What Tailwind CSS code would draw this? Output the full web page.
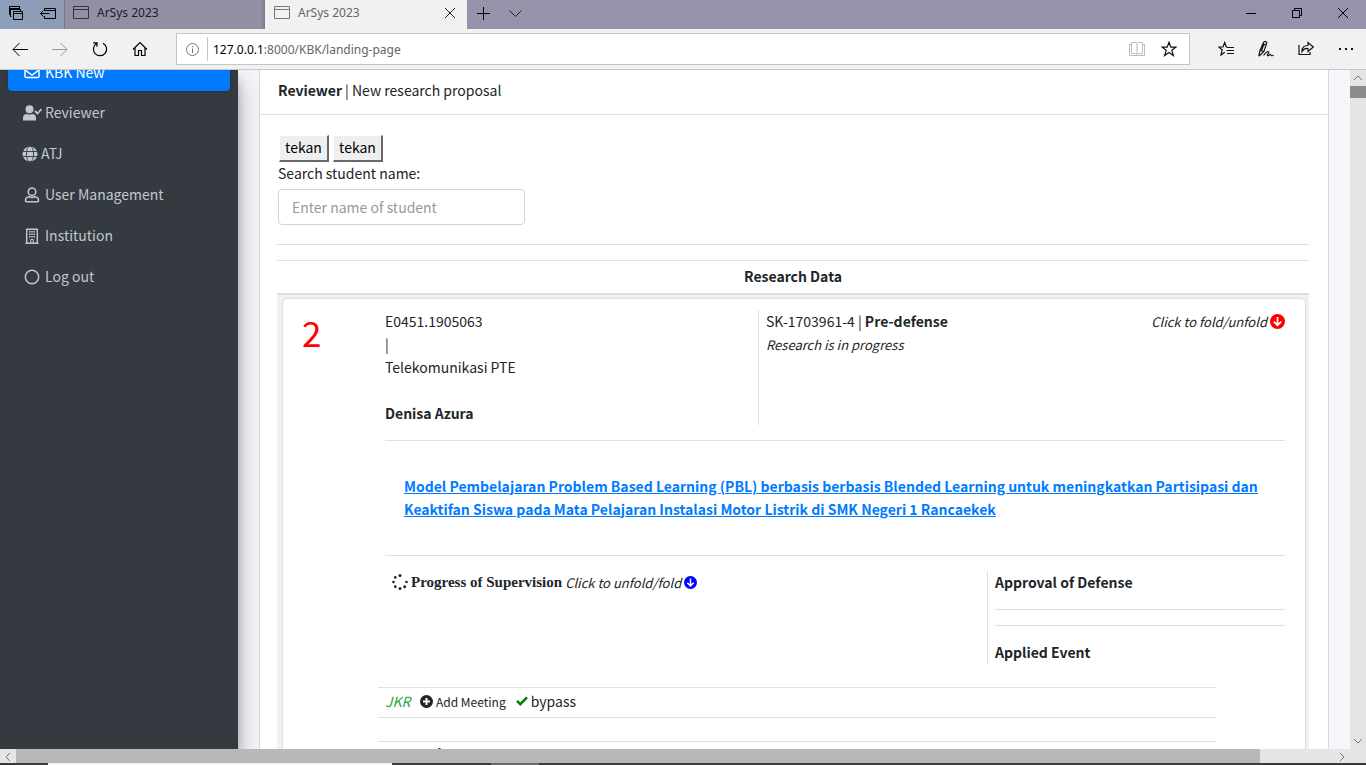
<!DOCTYPE html>
<html lang="en">
<head>
<meta charset="utf-8">
<title>ArSys 2023</title>
<script src="https://cdn.jsdelivr.net/npm/@tailwindcss/browser@4"></script>
</head>
<body class="h-screen overflow-hidden flex flex-col bg-[#f1f1f1] font-['Noto_Sans_CJK_SC',sans-serif] text-[14px] leading-[23px] text-[#212529]">

<!-- Tab strip -->
<header class="h-[29px] shrink-0 flex items-stretch bg-linear-to-r from-[#8ba0bd] via-[#9694aa] via-10% to-[#9493ab] font-['Noto_Sans',sans-serif] text-[12px] leading-[16px]">
  <div class="w-16 flex items-center gap-4 pl-2 pb-[3px]">
    <button aria-label="Tabs set aside"><svg class="size-4" viewBox="0 0 16 16" fill="none" stroke="#000"><path d="M5.500 6.500h9v8h-9zM5.500 8.500h9M3.500 11.500h-1V4.500h10v2M2.500 9.500h-1V1.500h10v3M1.500 3.500h10"/></svg></button>
    <button aria-label="Set tabs aside"><svg class="size-4" viewBox="0 0 16 16" fill="none" stroke="#000"><path d="M4.500 6V3.500h11v10h-11V11M4.500 5.500h11M.5 8.500h9M3.500 5.500l-3 3 3 3"/></svg></button>
  </div>
  <div class="w-[201px] flex items-center gap-2 pl-2 pb-[3px] border-l border-[#77778c] bg-[#9390a6] shadow-[inset_-4px_0_4px_-3px_#6f6d82]">
    <svg class="w-4 h-[14px]" viewBox="0 0 16 14" fill="none" stroke="#33333d"><path d="M.5.500h15v12H.5zM.5 3.500h15"/></svg>
    <span class="text-[#1d1d25]">ArSys 2023</span>
  </div>
  <div class="w-[202px] flex items-center gap-2 pl-[9px] pr-3 pb-[3px] bg-[#f1f1f1]">
    <svg class="w-4 h-[14px]" viewBox="0 0 16 14" fill="none" stroke="#777"><path d="M.5.500h15v12H.5zM.5 3.500h15"/></svg>
    <span class="text-[#666] grow">ArSys 2023</span>
    <button aria-label="Close tab"><svg class="size-[10px] block" viewBox="0 0 10 10" stroke="#222"><path d="M0 0l10 10M10 0L0 10"/></svg></button>
  </div>
  <div class="grow flex items-center gap-[19px] pl-[10px] pb-[3px]">
    <button aria-label="New tab"><svg class="size-[13px] block" viewBox="0 0 13 13" stroke="#000"><path d="M6.500 0v13M0 6.500h13"/></svg></button>
    <button aria-label="Tab previews"><svg class="w-[13px] h-[7px] block" viewBox="0 0 13 7" fill="none" stroke="#222"><path d="M.5.500l6 6 6-6"/></svg></button>
  </div>
  <div class="flex items-center gap-9 pr-[18px] pb-[3px]">
    <button aria-label="Minimize"><svg class="size-[10px] block" viewBox="0 0 10 10" stroke="#000"><path d="M0 5.500h10"/></svg></button>
    <button aria-label="Restore"><svg class="size-[10px] block" viewBox="0 0 10 10" fill="none" stroke="#000"><path d="M.5 2.500h7v7h-7zM2.500 2.500v-2h7v7h-2"/></svg></button>
    <button aria-label="Close"><svg class="size-[10px] block" viewBox="0 0 10 10" stroke="#000"><path d="M0 0l10 10M10 0L0 10"/></svg></button>
  </div>
</header>

<!-- Address bar -->
<nav aria-label="Browser" class="h-[41px] shrink-0 flex items-center border-b border-[#c8c8c8] font-['Noto_Sans',sans-serif] text-[12px]">
  <div class="w-[176px] flex items-center gap-6 pl-3">
    <button aria-label="Back"><svg class="size-4 block" viewBox="0 0 16 16" fill="none" stroke="#000"><path d="M1 8.500h15M7.500 2L1 8.500 7.500 15"/></svg></button>
    <button aria-label="Forward"><svg class="size-4 block" viewBox="0 0 16 16" fill="none" stroke="#999"><path d="M0 8.500h15M8.500 2L15 8.500 8.500 15"/></svg></button>
    <button aria-label="Refresh"><svg class="size-4 block" viewBox="0 0 16 16" fill="none" stroke="#000" stroke-width="1.200"><path d="M4.500 2.500A6.600 6.600 0 1 0 11 2.200M1.200 1.800H5v3.900"/></svg></button>
    <button aria-label="Home"><svg class="size-4 block" viewBox="0 0 16 16" fill="none" stroke="#000" stroke-width="1.200"><path d="M1 8.500l7-7 7 7M3 7v7.500h3.500V9.500h3v5H13V7"/></svg></button>
  </div>
  <div class="grow h-8 flex items-center bg-white border border-[#c6c6c6]">
    <svg class="size-[13px] ml-[9px] mr-2" viewBox="0 0 13 13" fill="none" stroke="#777"><circle cx="6.500" cy="6.500" r="6"/><path d="M6.500 5.500v4.500M6.500 3v1.200"/></svg>
    <div class="h-6 border-l border-[#c6c6c6] pl-[5px] grow text-[#666] leading-[25px]"><span class="text-black">127.0.0.1</span>:8000/KBK/landing-page</div>
    <div class="flex items-center gap-4 pr-3">
      <button aria-label="Reading view"><svg class="size-4 block" viewBox="0 0 16 16" fill="none" stroke="#bbb"><path d="M2.500 1.500h4q1 0 1.500 1 .5-1 1.500-1h4v11h-4q-1 0-1.500 1-.5-1-1.500-1h-4zM8 2.500v11M2.500 3.500h-2v11h15v-11h-2"/></svg></button>
      <button aria-label="Add to favorites"><svg class="size-4 block" viewBox="0 0 16 16" fill="none" stroke="#111" stroke-width="1.200"><path d="M8 1.200l1.800 4.900h5.100l-4.100 3.200 1.500 5.200L8 11.500l-4.300 3 1.500-5.200L1.100 6.100h5.100z"/></svg></button>
    </div>
  </div>
  <div class="w-[176px] flex items-center gap-6 pl-7">
    <button aria-label="Favorites"><svg class="size-4 block" viewBox="0 0 16 16" fill="none" stroke="#111" stroke-width="1.200"><path d="M9.500 6H8.300L6.700 1.500 5 6H.8l3.400 3-1.200 5 3.800-2.700M9 6.500h7M8.500 9.500H16M9 12.500h7"/></svg></button>
    <button aria-label="Add notes"><svg class="size-4 block" viewBox="0 0 16 16" fill="none" stroke="#111" stroke-width="1.200"><path d="M.8 15.200L2 9.500 5.500 1.500Q7-.5 8.800 1.500L6 10.500.8 15.200M5 3l3.200 1.200M6 2.500L3.500 10M2 9.500l4 1M5.500 14.500q4-5 5-3.500 1 1-1 2.500-.5 2 1.500.8 1.500-1.300 2.300 0 .7 1 2.200-.3"/></svg></button>
    <button aria-label="Share"><svg class="size-4 block" viewBox="0 0 16 16" fill="none" stroke="#111" stroke-width="1.200"><path d="M1 4v9.500h11V11M4 10.500Q4 4.500 10 4.500V1.500L15.300 6 10 10.500v-3Q6 7 4 10.500z"/></svg></button>
    <button aria-label="Settings and more"><svg class="size-4 block" viewBox="0 0 16 16" fill="#111"><path d="M1 7h2v2H1zM7 7h2v2H7zM13 7h2v2h-2z"/></svg></button>
  </div>
</nav>

<div class="grow min-h-0 flex overflow-hidden">
  <!-- Sidebar -->
  <aside class="w-[238px] shrink-0 bg-[#343a40] px-2 text-[#c2c7d0] z-10 shadow-[0_14px_28px_rgba(0,0,0,0.25),0_10px_10px_rgba(0,0,0,0.22)]">
    <nav aria-label="Main" class="-mt-[17px] flex flex-col gap-1">
      <a href="#" class="h-[38px] -mb-px flex items-center gap-[5px] pl-4 w-[222px] rounded bg-[#007bff] text-white shadow-sm">
        <svg class="size-4" viewBox="0 0 16 16" fill="none" stroke="currentColor" stroke-width="1.500"><rect x="1" y="2.500" width="14" height="11" rx="1"/><path d="M1 6l7 5 7-5"/></svg>KBK New</a>
      <a href="#" class="h-[37px] flex items-center gap-[3px] pl-[14px]">
        <svg class="w-5 h-4" viewBox="0 0 20 16" fill="currentColor"><circle cx="7.500" cy="4.200" r="4"/><path d="M1 15.500V13q0-4 4-4 2.500 1 5 0 4 0 4 4v2.500z"/><path d="M13 6l2.500 2.500L19.500 4" fill="none" stroke="currentColor" stroke-width="1.800"/></svg>Reviewer</a>
      <a href="#" class="h-[37px] flex items-center gap-[3px] pl-[14px]">
        <svg class="size-4" viewBox="0 0 16 16"><circle cx="8" cy="8" r="7.500" fill="currentColor"/><g fill="none" stroke="#343a40" stroke-width=".9"><ellipse cx="8" cy="8" rx="3.600" ry="8"/><path d="M0 5.500h16M0 10.500h16"/></g></svg>ATJ</a>
      <a href="#" class="h-[37px] flex items-center gap-[5px] pl-4">
        <svg class="size-4" viewBox="0 0 16 16" fill="none" stroke="currentColor" stroke-width="1.500"><circle cx="8" cy="4.800" r="3.800"/><path d="M5 9.800q3 1.200 6 0 3.500.3 3.500 3.500v.5q0 1-1 1h-11q-1 0-1-1v-.5q0-3.200 3.500-3.500z"/></svg>User Management</a>
      <a href="#" class="h-[37px] flex items-center gap-[5px] pl-4">
        <svg class="size-4" viewBox="0 0 16 16" fill="none" stroke="currentColor"><path d="M1.500 15.200h13" stroke-width="1.500"/><path d="M2.700 15V1.200h10.600V15" stroke-width="1.400"/><path d="M5 3.800h6M5 6.300h6M5 8.800h6" stroke-width="1.500" stroke-dasharray="1.500 .75"/><path d="M6.700 15v-3.500h2.600V15"/></svg>Institution</a>
      <a href="#" class="h-[37px] flex items-center gap-[5px] pl-4">
        <svg class="size-4" viewBox="0 0 16 16" fill="none" stroke="currentColor" stroke-width="1.500"><circle cx="8" cy="8" r="6.700"/></svg>Log out</a>
    </nav>
  </aside>

  <!-- Page content -->
  <main class="grow min-w-0 bg-[#f4f6f9] pl-[21px] pr-[21px]">
    <section class="relative z-20 overflow-hidden bg-white border-x border-[#d5d8dc] h-full">
      <h1 class="h-[45px] flex items-center gap-[3px] pl-[18px] pb-[3px] border-b border-[#dfdfdf]"><b>Reviewer</b> | New research proposal</h1>
      <div class="pl-[17px] pr-[19px] pt-5">
        <div class="flex gap-1 pl-[2px]">
          <button class="w-[50px] h-[27px] pb-px bg-[#efefef] border-r-2 border-b-2 border-[#696969] border-t border-l border-t-white border-l-white text-black">tekan</button>
          <button class="w-[50px] h-[27px] pb-px bg-[#efefef] border-r-2 border-b-2 border-[#696969] border-t border-l border-t-white border-l-white text-black">tekan</button>
        </div>
        <label for="student" class="block pl-px">Search student name:</label>
        <input id="student" type="text" placeholder="Enter name of student" class="mt-1 ml-px block w-[247px] h-9 rounded border border-[#ced4da] pl-[13px] pr-3 pb-px placeholder:text-[#939ba2]">
        <hr class="mt-[19px] mb-[15px] border-[#e0e0e0]">

        <table class="w-full border-collapse">
          <thead><tr><th class="h-[33px] p-0 border-t border-b-2 border-[#dee2e6] border-b-[#dedede] font-bold">Research Data</th></tr></thead>
          <tbody><tr><td class="bg-[#f2f2f2] p-0 pt-1 pl-[6px] pr-1">
            <article class="bg-white rounded-t-[4px] shadow-[0_0_2px_rgba(0,0,0,0.28)] h-[600px] pt-[11px] pl-[102px] pr-[20px]">
              <div class="relative flex h-[115px]">
                <div class="absolute -left-[83px] -top-px text-[35px] leading-[46px] text-[#f00]">2</div>
                <div class="w-[373px] shrink-0">
                  <div>E0451.1905063</div>
                  <div>|</div>
                  <div>Telekomunikasi PTE</div>
                  <div class="mt-[23px] font-bold">Denisa Azura</div>
                </div>
                <div class="grow border-l border-[#dedede] pl-[7px]">
                  <div>SK-1703961-4 | <b>Pre-defense</b></div>
                  <div class="italic text-[13px]">Research is in progress</div>
                </div>
                <div class="flex items-center gap-[3px] self-start">
                  <span class="italic text-[13px]">Click to fold/unfold</span>
                  <button aria-label="Fold"><svg class="size-[15px] block" viewBox="0 0 15 15"><circle cx="7.500" cy="7.500" r="7.500" fill="#f00"/><path d="M7.500 3v8.500M3.800 7.700l3.700 3.700 3.700-3.700" fill="none" stroke="#fff" stroke-width="1.700"/></svg></button>
                </div>
              </div>
              <hr class="mt-[15px] border-[#e0e0e0]">
              <h2 class="mt-[34px] px-[19px] font-bold"><a href="#" class="text-[#007bff] underline">Model Pembelajaran Problem Based Learning (PBL) berbasis berbasis Blended Learning untuk meningkatkan Partisipasi dan Keaktifan Siswa pada Mata Pelajaran Instalasi Motor Listrik di SMK Negeri 1 Rancaekek</a></h2>
              <hr class="mt-[34px] border-[#e0e0e0]">
              <div class="mt-[15px] flex">
                <div class="grow flex items-center gap-[3px] self-start pl-[7px]">
                  <svg class="size-4" viewBox="0 0 16 16" fill="#212529"><circle cx="8" cy="1.500" r="1.500"/><circle cx="3.300" cy="3.400" r="1.300"/><circle cx="1.500" cy="8" r="1.300"/><circle cx="3.300" cy="12.700" r="1.400"/><circle cx="8" cy="14.500" r="1.500"/><circle cx="12.700" cy="12.700" r="1.500"/><circle cx="14.500" cy="8" r="1.300"/></svg>
                  <b class="font-['Liberation_Serif',serif] text-[15px]">Progress of Supervision</b>
                  <span class="italic text-[13px]">Click to unfold/fold</span>
                  <button aria-label="Unfold"><svg class="size-[13px] block" viewBox="0 0 15 15"><circle cx="7.500" cy="7.500" r="7.500" fill="#00f"/><path d="M7.500 3v8.500M3.800 7.700l3.700 3.700 3.700-3.700" fill="none" stroke="#fff" stroke-width="1.700"/></svg></button>
                </div>
                <div class="w-[298px] shrink-0 border-l border-[#dedede] pl-[7px]">
                  <h3 class="font-bold">Approval of Defense</h3>
                  <hr class="my-[15px] border-[#e0e0e0]">
                  <hr class="my-[15px] border-[#e0e0e0]">
                  <h3 class="font-bold">Applied Event</h3>
                </div>
              </div>
              <div class="mt-[23px] -ml-[7px] mr-[69px]">
                <div class="h-[31px] flex items-center border-y border-[#dee2e6] pl-[7px] pb-[2px]">
                  <span class="italic text-[#28a745] w-[35px]">JKR</span>
                  <button class="flex items-center gap-[3px] text-[12px]"><svg class="size-[13px]" viewBox="0 0 13 13"><circle cx="6.500" cy="6.500" r="6.500" fill="#212529"/><path d="M6.500 3v7M3 6.500h7" stroke="#fff" stroke-width="2"/></svg>Add Meeting</button>
                  <button class="flex items-center gap-[3px] ml-[10px]"><svg class="w-3 h-[10px]" viewBox="0 0 12 10" fill="none" stroke="#008000" stroke-width="2.600"><path d="M1 4.800l3.300 3.300L11 1.300"/></svg>bypass</button>
                </div>
                <div class="mt-[23px] h-8 border-t border-[#dee2e6] pl-[60px] pt-[6px]"><svg class="size-[3px]" viewBox="0 0 3 3"><circle cx="1.500" cy="1.500" r="1.500" fill="#212529"/></svg></div>
              </div>
            </article>
          </td></tr></tbody>
        </table>
      </div>
    </section>
  </main>

  <!-- Vertical scrollbar -->
  <div class="w-4 shrink-0 bg-[#e5e5e5] flex flex-col items-center">
    <svg class="w-4 h-4 shrink-0" viewBox="0 0 16 16" fill="none" stroke="#777"><path d="M4 10l4-4 4 4"/></svg>
    <div class="w-full h-3 bg-[#8b8b8b]"></div>
    <svg class="w-4 h-4 mt-auto shrink-0" viewBox="0 0 16 16" fill="none" stroke="#777"><path d="M4 6l4 4 4-4"/></svg>
  </div>
</div>

<!-- Horizontal scrollbar -->
<div class="h-[14px] shrink-0 flex bg-[#e5e5e5]">
  <svg class="w-4 h-[14px] shrink-0" viewBox="0 0 16 14" fill="none" stroke="#777"><path d="M10 4L6 8l4 4"/></svg>
  <div class="grow bg-[#b8b8b8]"></div>
  <div class="w-[106px] flex justify-end pr-4"><svg class="w-4 h-[14px]" viewBox="0 0 16 14" fill="none" stroke="#777"><path d="M6 4l4 4-4 4"/></svg></div>
</div>
<!-- Top edge of the taskbar -->
<div class="h-[2px] shrink-0 flex bg-[#3a3a3a]"><div class="ml-12 w-[344px] bg-[#f2f2f2]"></div><div class="ml-[99px] w-12 bg-[#6a6a6a]"></div></div>
</body>
</html>
